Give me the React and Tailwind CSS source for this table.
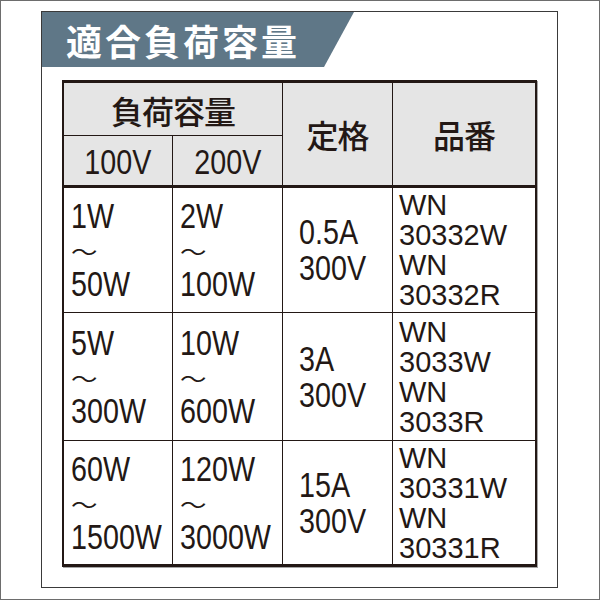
const rows = [
  { w100: ["1W", "50W"], w200: ["2W", "100W"], rating: ["0.5A", "300V"], parts: ["WN", "30332W", "WN", "30332R"], h: "h-[125px]" },
  { w100: ["5W", "300W"], w200: ["10W", "600W"], rating: ["3A", "300V"], parts: ["WN", "3033W", "WN", "3033R"], h: "h-[128px]" },
  { w100: ["60W", "1500W"], w200: ["120W", "3000W"], rating: ["15A", "300V"], parts: ["WN", "30331W", "WN", "30331R"], h: "h-[123px]" },
];

// condensed look: Liberation Sans squeezed horizontally
function Narrow({ children, center }) {
  return (
    <span className={`inline-block whitespace-nowrap scale-x-[0.82] ${center ? "origin-center" : "origin-left"}`}>
      {children}
    </span>
  );
}

function Range({ from, to }) {
  return (
    <div className="flex flex-col justify-center h-full pl-[7px] text-[35px] leading-[34px]">
      <div><Narrow>{from}</Narrow></div>
      <div className="h-[34px] flex items-center">
        <span className="inline-block origin-left scale-x-[1.2] text-[22px] leading-none font-['Noto_Sans_CJK_JP',sans-serif]">〜</span>
      </div>
      <div><Narrow>{to}</Narrow></div>
    </div>
  );
}

export default function App() {
  return (
    <div className="w-[600px] h-[600px] border border-[#6d6d6d] bg-white text-[#231815] font-['Liberation_Sans',Arial,sans-serif]">
      <div className="ml-[40px] mt-[10px] w-[517px] h-[577px] border border-[#3a3a3a]">
        {/* title banner */}
        <div className="w-[312px] h-[55px] bg-[#5f7787] flex items-center pl-[24px] [clip-path:polygon(0_0,100%_0,calc(100%-30px)_100%,0_100%)]">
          <span className="text-white font-bold text-[36px] tracking-[3px] leading-none font-['Noto_Sans_CJK_JP',sans-serif]">
            適合負荷容量
          </span>
        </div>

        <div className="mx-[20px] mt-[13px] border-x-2 border-y-[3px] border-[#231815] shadow-[1px_1px_0_rgba(0,0,0,0.35)]">
          {/* header */}
          <div className="grid grid-cols-[109px_110px_110px_1fr] grid-rows-[53px_49px] bg-[#e5e5e5] border-b-[3px] border-[#231815]">
            <div className="col-span-2 border-r border-b border-[#231815] flex items-center justify-center pt-[1px] text-[32px] tracking-[-1px] font-medium font-['Noto_Sans_CJK_JP',sans-serif]">
              負荷容量
            </div>
            <div className="row-span-2 border-r border-[#231815] flex items-center justify-center text-[32px] tracking-[-1px] font-medium font-['Noto_Sans_CJK_JP',sans-serif]">
              定格
            </div>
            <div className="row-span-2 flex items-center justify-center text-[32px] tracking-[-1px] font-medium font-['Noto_Sans_CJK_JP',sans-serif]">
              品番
            </div>
            <div className="border-r border-[#231815] flex items-center justify-center pt-[3px] text-[35px]">
              <Narrow center>100V</Narrow>
            </div>
            <div className="border-r border-[#231815] flex items-center justify-center pt-[3px] text-[35px]">
              <Narrow center>200V</Narrow>
            </div>
          </div>

          {/* body */}
          {rows.map((r, i) => (
            <div
              key={i}
              className={`grid grid-cols-[109px_110px_110px_1fr] ${r.h} ${i < rows.length - 1 ? "border-b border-[#231815]" : ""}`}
            >
              <div className="border-r border-[#231815]">
                <Range from={r.w100[0]} to={r.w100[1]} />
              </div>
              <div className="border-r border-[#231815]">
                <Range from={r.w200[0]} to={r.w200[1]} />
              </div>
              <div className="border-r border-[#231815] flex flex-col justify-center pl-[16px] text-[35px] leading-[36px]">
                {r.rating.map((t) => (
                  <div key={t}><Narrow>{t}</Narrow></div>
                ))}
              </div>
              <div className="flex flex-col justify-center pl-[6px] text-[29px] leading-[30px]">
                {r.parts.map((t, j) => (
                  <div key={j}>{t}</div>
                ))}
              </div>
            </div>
          ))}
        </div>
      </div>
    </div>
  );
}
